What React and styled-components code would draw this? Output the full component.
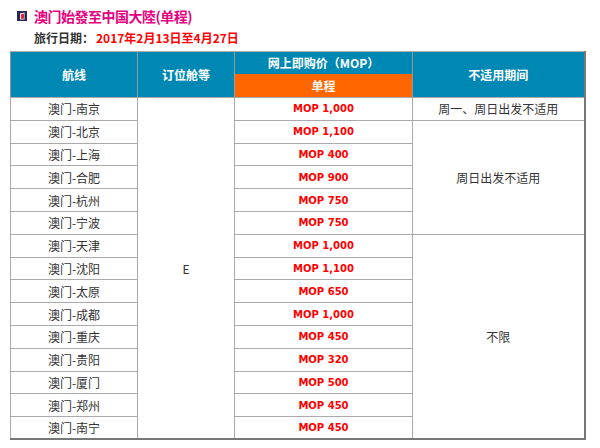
import styled, { createGlobalStyle } from 'styled-components';

const GlobalStyle = createGlobalStyle`
  html, body {
    margin: 0;
    padding: 0;
    background: #fff;
  }
  body {
    font-family: "Noto Sans CJK SC", "DejaVu Sans", sans-serif;
  }
`;

const Page = styled.div`
  width: 600px;
  padding: 6px 0 0 10px;
  box-sizing: border-box;
`;

const TitleRow = styled.div`
  display: flex;
  align-items: center;
  gap: 7px;
  height: 20px;
  padding-left: 7px;
`;

const Title = styled.h2`
  margin: 0;
  font-size: 14px;
  font-weight: bold;
  color: #e5007f;
  line-height: 20px;
  letter-spacing: -0.5px;
`;

const DateRow = styled.div`
  display: flex;
  align-items: center;
  height: 22px;
  padding-left: 24px;
  margin-bottom: 3px;
  font-size: 12px;
  font-weight: bold;
`;

const DateLabel = styled.span`
  color: #333;
  width: 62px;
`;

const DateValue = styled.span`
  color: #f00;
`;

const Table = styled.table`
  width: 574px;
  border-collapse: collapse;
  table-layout: fixed;
  border-top: 1px solid #aaa;
  border-left: 1px solid #aaa;
  border-right: 2px solid #777;
  border-bottom: 2px solid #777;
  font-size: 12px;
  text-align: center;
`;

const Th = styled.th`
  background: ${(p) => (p.$orange ? '#ff6600' : '#0088b4')};
  color: #fff;
  font-weight: bold;
  font-size: 12px;
  text-align: center;
  height: ${(p) => p.$h || 22}px;
  padding: 0;
  border-left: 1px solid #999;
  border-right: 1px solid #999;
  box-sizing: border-box;
`;

const Td = styled.td`
  height: 22.8px;
  padding: 0;
  text-align: center;
  border: 1px solid #aaa;
  color: ${(p) => (p.$price ? '#f00' : '#333')};
  font-family: ${(p) =>
    p.$price ? '"DejaVu Sans", "Noto Sans CJK SC", sans-serif' : '"Noto Sans CJK SC", sans-serif'};
  font-weight: ${(p) => (p.$price ? 'bold' : 'normal')};
  font-size: ${(p) => (p.$price ? '10px' : '12px')};
  box-sizing: border-box;
`;

const Logo = () => (
  <svg width="10" height="10" viewBox="0 0 10 10">
    <rect width="10" height="10" fill="#2a2758" />
    <path d="M3 2.5 L7.5 1.5 L7.5 8.5 L3 8.5 Z" fill="#fff" />
    <path d="M4 3.2 L7 2.6 L7 7.8 L4 7.8 Z" fill="#e3242b" />
  </svg>
);

const routes = [
  ['澳门-南京', 'MOP 1,000'],
  ['澳门-北京', 'MOP 1,100'],
  ['澳门-上海', 'MOP 400'],
  ['澳门-合肥', 'MOP 900'],
  ['澳门-杭州', 'MOP 750'],
  ['澳门-宁波', 'MOP 750'],
  ['澳门-天津', 'MOP 1,000'],
  ['澳门-沈阳', 'MOP 1,100'],
  ['澳门-太原', 'MOP 650'],
  ['澳门-成都', 'MOP 1,000'],
  ['澳门-重庆', 'MOP 450'],
  ['澳门-贵阳', 'MOP 320'],
  ['澳门-厦门', 'MOP 500'],
  ['澳门-郑州', 'MOP 450'],
  ['澳门-南宁', 'MOP 450'],
];

// 不适用期间 column: row index -> [text, rowSpan]
const periods = {
  0: ['周一、周日出发不适用', 1],
  1: ['周日出发不适用', 5],
  6: ['不限', 9],
};

const App = () => {
  return (
    <>
      <GlobalStyle />
      <Page>
        <TitleRow>
          <Logo />
          <Title>澳门始發至中国大陸(单程)</Title>
        </TitleRow>
        <DateRow>
          <DateLabel>旅行日期：</DateLabel>
          <DateValue>2017年2月13日至4月27日</DateValue>
        </DateRow>
        <Table>
          <colgroup>
            <col style={{ width: 127 }} />
            <col style={{ width: 97 }} />
            <col style={{ width: 178 }} />
            <col style={{ width: 172 }} />
          </colgroup>
          <thead>
            <tr>
              <Th rowSpan={2}>航线</Th>
              <Th rowSpan={2}>订位舱等</Th>
              <Th $h={22}>网上即购价（MOP）</Th>
              <Th rowSpan={2}>不适用期间</Th>
            </tr>
            <tr>
              <Th $orange $h={24}>单程</Th>
            </tr>
          </thead>
          <tbody>
            {routes.map(([route, price], i) => (
              <tr key={route}>
                <Td>{route}</Td>
                {i === 0 && <Td rowSpan={routes.length}>E</Td>}
                <Td $price>{price}</Td>
                {periods[i] && <Td rowSpan={periods[i][1]}>{periods[i][0]}</Td>}
              </tr>
            ))}
          </tbody>
        </Table>
      </Page>
    </>
  );
};

export default App;
